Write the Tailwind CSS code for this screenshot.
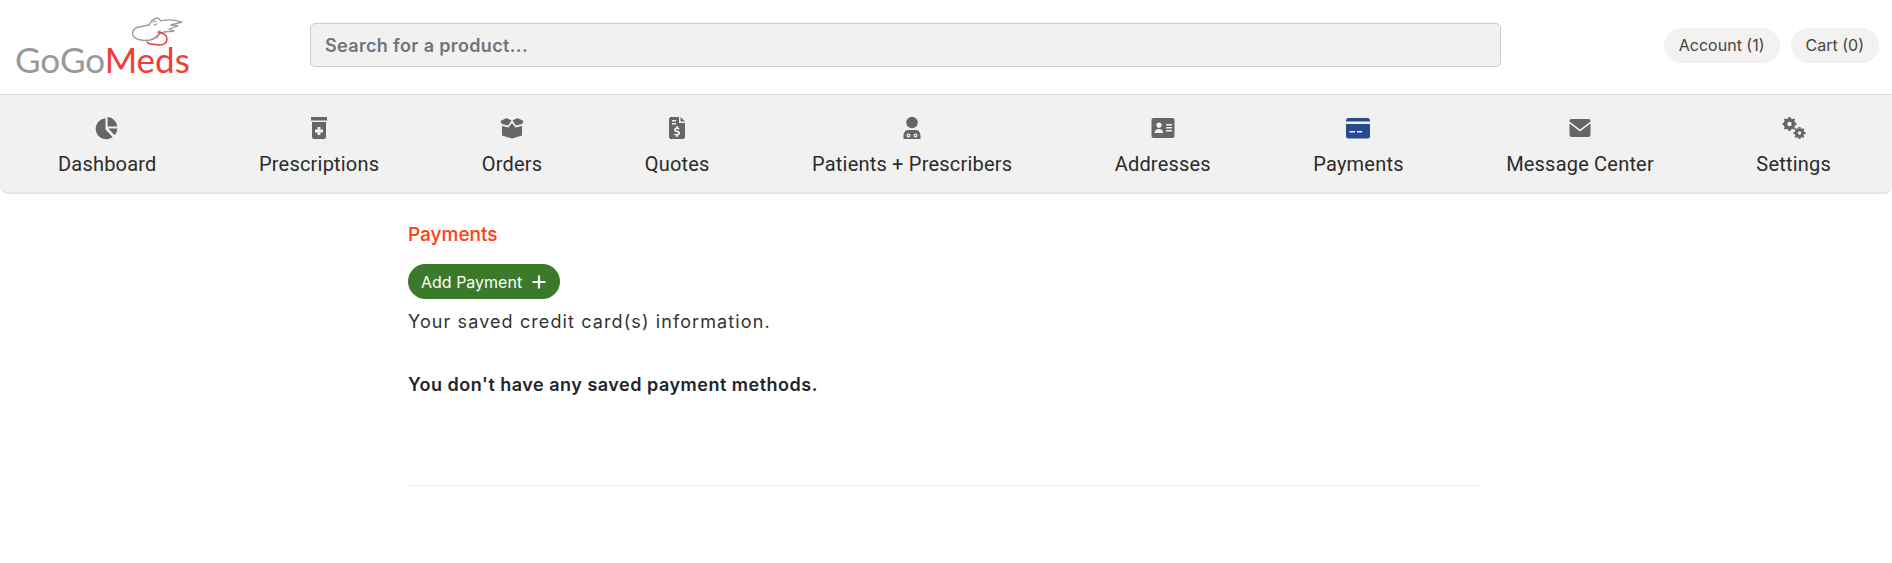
<!DOCTYPE html>
<html lang="en">
  <head>
    <meta charset="UTF-8" />
    <title>Payments - GoGoMeds</title>
    <script src="https://cdn.jsdelivr.net/npm/@tailwindcss/browser@4"></script>
  </head>
  <body class="bg-white min-h-screen font-['Inter',sans-serif] text-[#212529]">

    <!-- Header -->
    <header class="h-[94px] pb-[4px] flex items-center">
      <div class="w-[310px] shrink-0 relative h-[90px]">
        <svg class="absolute left-[131px] top-[16px]" width="54" height="32" viewBox="0 0 54 32" fill="none" stroke-linecap="round" stroke-linejoin="round">
          <path d="M18 9 L8 11 C2 12 0 17 3 21 C6 24 13 25 19 24 C24 23 28 19 29 15" stroke="#999" stroke-width="1.4"/>
          <path d="M18 9 C20 5 23 2 27 2 L30 5 C37 3 44 4 51 6 L40 9 L47 10 L38 13 L43 15 L33 16 C29 17 27 19 26 22" stroke="#999" stroke-width="1.3"/>
          <path d="M22 6 L25 5 M23 9 L26 8" stroke="#999" stroke-width="1.2"/>
          <path d="M27 16 C33 17 36 20 36 23 C36 27 33 29 28 29 L20 28 C18 28 17 27 16 26" stroke="#ee4036" stroke-width="1.5"/>
        </svg>
        <div class="absolute left-[15px] top-[39px] text-[35px] leading-[40px] font-['Lato',sans-serif]"><span class="text-[#999999]">GoGo</span><span class="text-[#ee4036]">Meds</span></div>
      </div>
      <div class="w-[1191px] h-[44px] shrink-0 bg-[#f1f1f1] border border-[#cccccc] rounded-[5px] flex items-center pl-[14px] text-[18px] tracking-[0.35px] font-semibold text-[#6c757d]">Search for a product...</div>
      <div class="ml-auto pr-[13px] flex gap-[11px] text-[16px] text-[#444444]">
        <a class="h-[35px] px-[15px] flex items-center rounded-full bg-[#f3f2f1]">Account (1)</a>
        <a class="h-[35px] px-[15px] flex items-center rounded-full bg-[#f3f2f1]">Cart (0)</a>
      </div>
    </header>

    <!-- Nav -->
    <nav class="h-[100px] bg-[#f1f1f1] border-t border-[#dddddd] border-b-2 border-b-[#e4e4ec] rounded-b-[8px] flex justify-between pl-[58px] pr-[61px] pt-[21px] font-['Roboto',sans-serif] text-[20px] tracking-[0.2px] text-[#2b2b2b]">
      <a class="flex flex-col items-center">
        <svg class="h-[24px] w-[24px] mb-[9px]" viewBox="0 0 24 24" fill="#666666"><path d="M10.5 2.2 V13.4 L17.6 21 A10.5 10.5 0 1 1 10.5 2.2Z M12.6 1 A10.4 10.4 0 0 1 22.2 10.4 H12.6Z M13.4 12.6 H22.4 A10 10 0 0 1 19.6 19.2Z"/></svg>
        <span>Dashboard</span>
      </a>
      <a class="flex flex-col items-center">
        <svg class="h-[24px] w-[24px] mb-[9px]" viewBox="0 0 24 24" fill="#666666"><path fill-rule="evenodd" d="M4 1 H20 V4.5 H4Z M5 6 H19 V21 A2 2 0 0 1 17 23 H7 A2 2 0 0 1 5 21Z M10.5 11 V13.5 H8 V16.5 H10.5 V19 H13.5 V16.5 H16 V13.5 H13.5 V11Z"/></svg>
        <span>Prescriptions</span>
      </a>
      <a class="flex flex-col items-center">
        <svg class="h-[24px] w-[24px] mb-[9px]" viewBox="0 0 24 24" fill="#666666"><path d="M0.500 5 L6.500 2 L11.500 4.500 L8 9.500 L2 8 Z M23.500 5 L17.500 2 L12.500 4.500 L16 9.500 L22 8Z M2 10 L8.500 11.500 L12 7 L15.500 11.500 L22 10 V19.500 L12 22.500 L2 19.500Z"/></svg>
        <span>Orders</span>
      </a>
      <a class="flex flex-col items-center">
        <svg class="h-[24px] w-[24px] mb-[9px]" viewBox="0 0 24 24" fill="#666666"><path fill-rule="evenodd" d="M6 1 H14 V7 H20 V21 A2 2 0 0 1 18 23 H6 A2 2 0 0 1 4 21 V3 A2 2 0 0 1 6 1Z M15.500 1 L20 5.500 H15.500Z M7 4 V5.500 H11 V4Z M7 7 V8.500 H11 V7Z M11.200 10 V11.400 C9.800 11.700 9 12.600 9 13.800 C9 15.300 10.200 15.900 11.800 16.300 C12.800 16.600 13.200 16.900 13.200 17.300 C13.200 17.800 12.700 18.100 11.900 18.100 C11.100 18.100 10.300 17.800 9.600 17.400 L9 18.800 C9.600 19.200 10.400 19.500 11.200 19.600 V21 H12.800 V19.600 C14.200 19.300 15 18.400 15 17.200 C15 15.700 13.800 15 12.200 14.600 C11.200 14.300 10.800 14.100 10.800 13.700 C10.800 13.200 11.300 13 12 13 C12.700 13 13.400 13.200 14 13.500 L14.600 12.100 C14 11.800 13.400 11.500 12.800 11.400 V10Z"/></svg>
        <span>Quotes</span>
      </a>
      <a class="flex flex-col items-center">
        <svg class="h-[24px] w-[24px] mb-[9px]" viewBox="0 0 24 24" fill="#666666"><circle cx="12" cy="6.500" r="5.800"/><path fill-rule="evenodd" d="M8 14 H16 C19 14 20.500 17 20.500 20 V23 H3.500 V20 C3.500 17 5 14 8 14Z M8.500 17.500 A2 2 0 1 0 8.510 17.500Z M15.500 17.500 A2 2 0 1 0 15.510 17.500Z"/><circle cx="8.500" cy="19.500" r="0.800"/><circle cx="15.500" cy="19.500" r="0.800"/></svg>
        <span>Patients + Prescribers</span>
      </a>
      <a class="flex flex-col items-center">
        <svg class="h-[24px] w-[24px] mb-[9px]" viewBox="0 0 24 24" fill="#666666"><path fill-rule="evenodd" d="M2.500 2 H21.500 A2 2 0 0 1 23.500 4 V20 A2 2 0 0 1 21.500 22 H2.500 A2 2 0 0 1 0.500 20 V4 A2 2 0 0 1 2.500 2Z M8 6.500 A2.700 2.700 0 1 0 8.010 6.500Z M3.500 17 H12 C12 14.500 10.500 13 8 13 C5.500 13 3.500 14.500 3.500 17Z M15 8 V9.500 H21 V8Z M15 11 V12.500 H21 V11Z M15 14 V15.500 H21 V14Z"/></svg>
        <span>Addresses</span>
      </a>
      <a class="flex flex-col items-center">
        <svg class="h-[24px] w-[24px] mb-[9px]" viewBox="0 0 24 24" fill="#2a4a8f"><path fill-rule="evenodd" d="M2.500 2 H21.500 A2.500 2.500 0 0 1 24 4.500 V5.500 H0 V4.500 A2.500 2.500 0 0 1 2.500 2Z M0 8 H24 V20 A2.500 2.500 0 0 1 21.500 22.500 H2.500 A2.500 2.500 0 0 1 0 20Z M3.500 15 V16.500 H9 V15Z M11 15 V16.500 H16 V15Z"/></svg>
        <span>Payments</span>
      </a>
      <a class="flex flex-col items-center">
        <svg class="h-[24px] w-[24px] mb-[9px]" viewBox="0 0 24 24" fill="#666666"><path d="M3 3 H21 A1.500 1.500 0 0 1 22.500 4.500 V5.500 L12 13.500 L1.500 5.500 V4.500 A1.500 1.500 0 0 1 3 3Z M1.500 7.500 L12 15.500 L22.500 7.500 V19 A2 2 0 0 1 20.500 21 H3.500 A2 2 0 0 1 1.500 19Z"/></svg>
        <span>Message Center</span>
      </a>
      <a class="flex flex-col items-center">
        <svg class="h-[24px] w-[24px] mb-[9px]" viewBox="0 0 24 24" fill="none" stroke="#666666" stroke-linecap="butt"><circle cx="7.500" cy="8" r="4" stroke-width="3.600"/><path d="M7.500 1 V3 M7.500 13 V15 M0.500 8 H2.500 M12.500 8 H14.500 M2.500 3 L4 4.500 M11 11.500 L12.500 13 M2.500 13 L4 11.500 M11 4.500 L12.500 3" stroke-width="2.400"/><circle cx="17.500" cy="17" r="3.300" stroke-width="3"/><path d="M17.500 11 V12.500 M17.500 21.500 V23 M11.500 17 H13 M22 17 H23.500 M13.300 12.800 L14.300 13.800 M20.700 20.200 L21.700 21.200 M13.300 21.200 L14.300 20.200 M20.700 13.800 L21.700 12.800" stroke-width="2.200"/></svg>
        <span>Settings</span>
      </a>
    </nav>

    <!-- Content -->
    <main class="ml-[408px] w-[1074px] pt-[29px]">
      <h1 class="text-[19px] leading-[24px] font-medium text-[#ff3d0e]">Payments</h1>
      <button class="mt-[17px] h-[35px] w-[152px] rounded-full bg-[#3a7a2a] text-white text-[16px] flex items-center pl-[13px] gap-[9px]">
        Add Payment
        <svg width="16" height="16" viewBox="0 0 16 16" stroke="white" stroke-width="2.200"><path d="M8 1.500 V14.500 M1.500 8 H14.500"/></svg>
      </button>
      <p class="mt-[11px] text-[18px] leading-[24px] tracking-[1.1px] text-[#333333]">Your saved credit card(s) information.</p>
      <p class="mt-[39px] text-[18px] leading-[24px] tracking-[0.5px] font-semibold text-[#212529]">You don't have any saved payment methods.</p>
      <hr class="mt-[88px] border-[#eeeeee]" />
    </main>

  </body>
</html>
